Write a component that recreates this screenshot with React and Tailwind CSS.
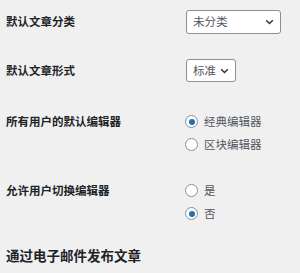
import React, { useState } from 'react';

function Chevron() {
  return (
    <svg width="9" height="6" viewBox="0 0 9 6" className="shrink-0">
      <path d="M1.2 1.2l3.3 3.3 3.3-3.3" fill="none" stroke="#2c3338" strokeWidth="1.4" />
    </svg>
  );
}

function FakeSelect({ value, wide }) {
  return (
    <div
      className={`flex items-center justify-between bg-white border border-[#8c8f94] rounded-[3px] pl-[6px] pr-[6px] text-[#50575e] text-[11.5px] ${wide ? 'w-[95px] h-[24px]' : 'w-[50px] h-[23px]'}`}
    >
      <span>{value}</span>
      <Chevron />
    </div>
  );
}

function Radio({ label, checked, onClick }) {
  return (
    <div className="flex items-center h-[23px] cursor-pointer" onClick={onClick}>
      <span className="w-[13px] h-[13px] rounded-full border border-[#8c8f94] bg-white flex items-center justify-center shrink-0">
        {checked && <span className="w-[6px] h-[6px] rounded-full bg-[#2271b1]"></span>}
      </span>
      <span className="ml-[6px] text-[11.5px] text-[#50575e]">{label}</span>
    </div>
  );
}

export default function App() {
  const [editor, setEditor] = useState('classic');
  const [allowSwitch, setAllowSwitch] = useState('no');

  return (
    <div
      className="w-[300px] h-[273px] bg-[#f0f0f1] pl-[6px] pt-[10px] overflow-hidden"
      style={{ fontFamily: '"Noto Sans CJK SC", "Noto Sans", sans-serif' }}
    >
      <div className="flex items-center h-[24px]">
        <div className="w-[180px] text-[11.5px] font-bold text-[#1d2327]">默认文章分类</div>
        <FakeSelect value="未分类" wide />
      </div>

      <div className="flex items-center h-[23px] mt-[25px]">
        <div className="w-[180px] text-[11.5px] font-bold text-[#1d2327]">默认文章形式</div>
        <FakeSelect value="标准" />
      </div>

      <div className="flex items-start mt-[28px]">
        <div className="w-[179px] leading-[23px] text-[11.5px] font-bold text-[#1d2327]">所有用户的默认编辑器</div>
        <div>
          <Radio label="经典编辑器" checked={editor === 'classic'} onClick={() => setEditor('classic')} />
          <Radio label="区块编辑器" checked={editor === 'block'} onClick={() => setEditor('block')} />
        </div>
      </div>

      <div className="flex items-start mt-[23px]">
        <div className="w-[179px] leading-[23px] text-[11.5px] font-bold text-[#1d2327]">允许用户切换编辑器</div>
        <div>
          <Radio label="是" checked={allowSwitch === 'yes'} onClick={() => setAllowSwitch('yes')} />
          <Radio label="否" checked={allowSwitch === 'no'} onClick={() => setAllowSwitch('no')} />
        </div>
      </div>

      <h2 className="mt-[20px] leading-[20px] text-[13.5px] font-bold text-[#1d2327]">通过电子邮件发布文章</h2>
    </div>
  );
}
